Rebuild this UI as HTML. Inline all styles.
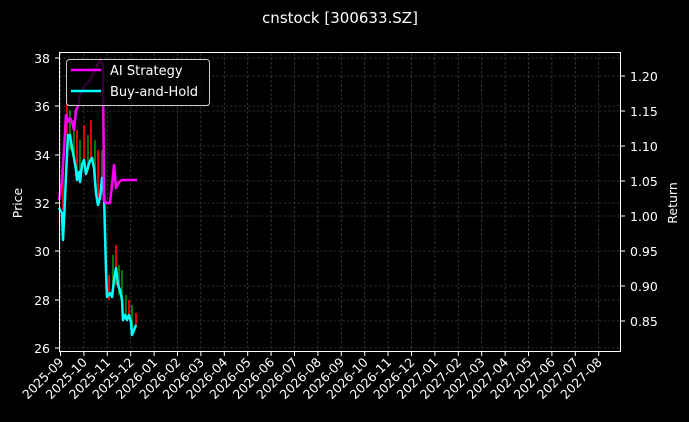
<!DOCTYPE html>
<html><head><style>
html,body{margin:0;padding:0;background:#000;overflow:hidden;width:689px;height:422px;}
svg{display:block;}
svg text{font-family:"DejaVu Sans","Liberation Sans",sans-serif;fill:#fff;}
</style></head><body>
<svg width="689" height="422" xmlns="http://www.w3.org/2000/svg">
<rect width="689" height="422" fill="#000"/>
<text x="340" y="23" font-size="15" text-anchor="middle">cnstock [300633.SZ]</text>
<g stroke="#3a3a3a" stroke-width="0.8" stroke-dasharray="2.5,2">
<line x1="59" y1="58" x2="620" y2="58"/><line x1="59" y1="106" x2="620" y2="106"/><line x1="59" y1="155" x2="620" y2="155"/><line x1="59" y1="203" x2="620" y2="203"/><line x1="59" y1="251" x2="620" y2="251"/><line x1="59" y1="300" x2="620" y2="300"/><line x1="59" y1="348" x2="620" y2="348"/>
<line x1="59" y1="76" x2="620" y2="76"/><line x1="59" y1="111" x2="620" y2="111"/><line x1="59" y1="146" x2="620" y2="146"/><line x1="59" y1="181" x2="620" y2="181"/><line x1="59" y1="216" x2="620" y2="216"/><line x1="59" y1="286" x2="620" y2="286"/><line x1="59" y1="321" x2="620" y2="321"/>
</g>
<g id="vg" stroke="#444" stroke-width="0.8" stroke-dasharray="2.5,2"></g>
<g stroke-width="2">
<line x1="63" y1="170" x2="63" y2="210" stroke="#d00"/><line x1="67" y1="95" x2="67" y2="135" stroke="#d00"/><line x1="70" y1="110" x2="70" y2="150" stroke="#070"/><line x1="74" y1="120" x2="74" y2="160" stroke="#070"/><line x1="77" y1="130" x2="77" y2="175" stroke="#d00"/><line x1="80" y1="140" x2="80" y2="180" stroke="#070"/><line x1="84" y1="125" x2="84" y2="165" stroke="#d00"/><line x1="88" y1="135" x2="88" y2="170" stroke="#070"/><line x1="91" y1="120" x2="91" y2="160" stroke="#d00"/><line x1="95" y1="140" x2="95" y2="180" stroke="#070"/><line x1="98" y1="150" x2="98" y2="200" stroke="#d00"/><line x1="102" y1="150" x2="102" y2="195" stroke="#070"/>
<line x1="109" y1="275" x2="109" y2="300" stroke="#d00"/><line x1="113" y1="255" x2="113" y2="295" stroke="#070"/><line x1="116" y1="245" x2="116" y2="285" stroke="#d00"/><line x1="119" y1="265" x2="119" y2="295" stroke="#070"/><line x1="122" y1="270" x2="122" y2="300" stroke="#070"/><line x1="126" y1="295" x2="126" y2="320" stroke="#070"/><line x1="129" y1="300" x2="129" y2="315" stroke="#d00"/><line x1="132" y1="305" x2="132" y2="330" stroke="#070"/><line x1="136" y1="313" x2="136" y2="327" stroke="#d00"/>
</g>
<polyline fill="none" stroke="#00ffff" stroke-width="2.5" stroke-linejoin="round" points="59,208 62,213 63,240 65,200 66,175 68,135 70,135 72,148 74,158 76,170 77,180 79,172 80,182 82,165 84,160 86,174 88,167 90,161 92,158 94,168 96,193 98,205 100,198 102,178 104,195 106,270 107,297 110,293 112,297 114,280 116,268 118,285 120,290 122,300 123,320 125,315 127,320 129,315 131,322 132,335 134,330 136,325"/>
<polyline fill="none" stroke="#ff00ff" stroke-width="2.5" stroke-linejoin="round" points="59,200 62,180 64,150 66,115 68,122 70,118 72,122 74,130 76,110 78,106 80,95 85,85 90,80 95,70 100,60 103,65 104,200 106,203 110,203 112,185 114,165 116,188 119,182 122,180 137,180"/>
<rect x="66.5" y="59.5" width="143" height="46" rx="3" fill="#000" fill-opacity="0.8" stroke="#ccc" stroke-width="1"/>
<line x1="71" y1="70" x2="101" y2="70" stroke="#ff00ff" stroke-width="2.5"/>
<line x1="71" y1="91" x2="101" y2="91" stroke="#00ffff" stroke-width="2.5"/>
<text x="110" y="75" font-size="13">AI Strategy</text>
<text x="110" y="96" font-size="13">Buy-and-Hold</text>
<rect x="59.5" y="52.5" width="561" height="299" fill="none" stroke="#fff" stroke-width="1"/>
<g font-size="12.5" text-anchor="end">
<text x="50" y="63">38</text><text x="50" y="111">36</text><text x="50" y="160">34</text><text x="50" y="208">32</text><text x="50" y="256">30</text><text x="50" y="305">28</text><text x="50" y="353">26</text>
</g>
<g stroke="#fff"><line x1="55" y1="58" x2="59" y2="58"/><line x1="55" y1="106" x2="59" y2="106"/><line x1="55" y1="155" x2="59" y2="155"/><line x1="55" y1="203" x2="59" y2="203"/><line x1="55" y1="251" x2="59" y2="251"/><line x1="55" y1="300" x2="59" y2="300"/><line x1="55" y1="348" x2="59" y2="348"/>
<line x1="621" y1="76" x2="625" y2="76"/><line x1="621" y1="111" x2="625" y2="111"/><line x1="621" y1="146" x2="625" y2="146"/><line x1="621" y1="181" x2="625" y2="181"/><line x1="621" y1="216" x2="625" y2="216"/><line x1="621" y1="251" x2="625" y2="251"/><line x1="621" y1="286" x2="625" y2="286"/><line x1="621" y1="321" x2="625" y2="321"/></g>
<g font-size="12.5">
<text x="630" y="81">1.20</text><text x="630" y="116">1.15</text><text x="630" y="151">1.10</text><text x="630" y="186">1.05</text><text x="630" y="221">1.00</text><text x="630" y="256">0.95</text><text x="630" y="291">0.90</text><text x="630" y="326">0.85</text>
</g>
<text transform="translate(22,203) rotate(-90)" font-size="12.5" text-anchor="middle">Price</text>
<text transform="translate(677,203) rotate(-90)" font-size="12.5" text-anchor="middle">Return</text>
<g id="xt" font-size="12.5" text-anchor="end"></g>
<script>
var labels=["2025-09","2025-10","2025-11","2025-12","2026-01","2026-02","2026-03","2026-04","2026-05","2026-06","2026-07","2026-08","2026-09","2026-10","2026-11","2026-12","2027-01","2027-02","2027-03","2027-04","2027-05","2027-06","2027-07","2027-08"];
var xt=document.getElementById('xt'),vg=document.getElementById('vg'),ns="http://www.w3.org/2000/svg";
labels.forEach(function(l,i){var x=60.5+i*23.4;
var ln=document.createElementNS(ns,'line');ln.setAttribute('x1',x);ln.setAttribute('x2',x);ln.setAttribute('y1',53);ln.setAttribute('y2',351);vg.appendChild(ln);
var tk=document.createElementNS(ns,'line');tk.setAttribute('x1',x);tk.setAttribute('x2',x);tk.setAttribute('y1',352);tk.setAttribute('y2',356);tk.setAttribute('stroke','#fff');xt.parentNode.insertBefore(tk,xt);
var t=document.createElementNS(ns,'text');t.setAttribute('transform','translate('+(x+4)+',363) rotate(-45)');t.textContent=l;xt.appendChild(t);});
</script>
</svg>
</body></html>
